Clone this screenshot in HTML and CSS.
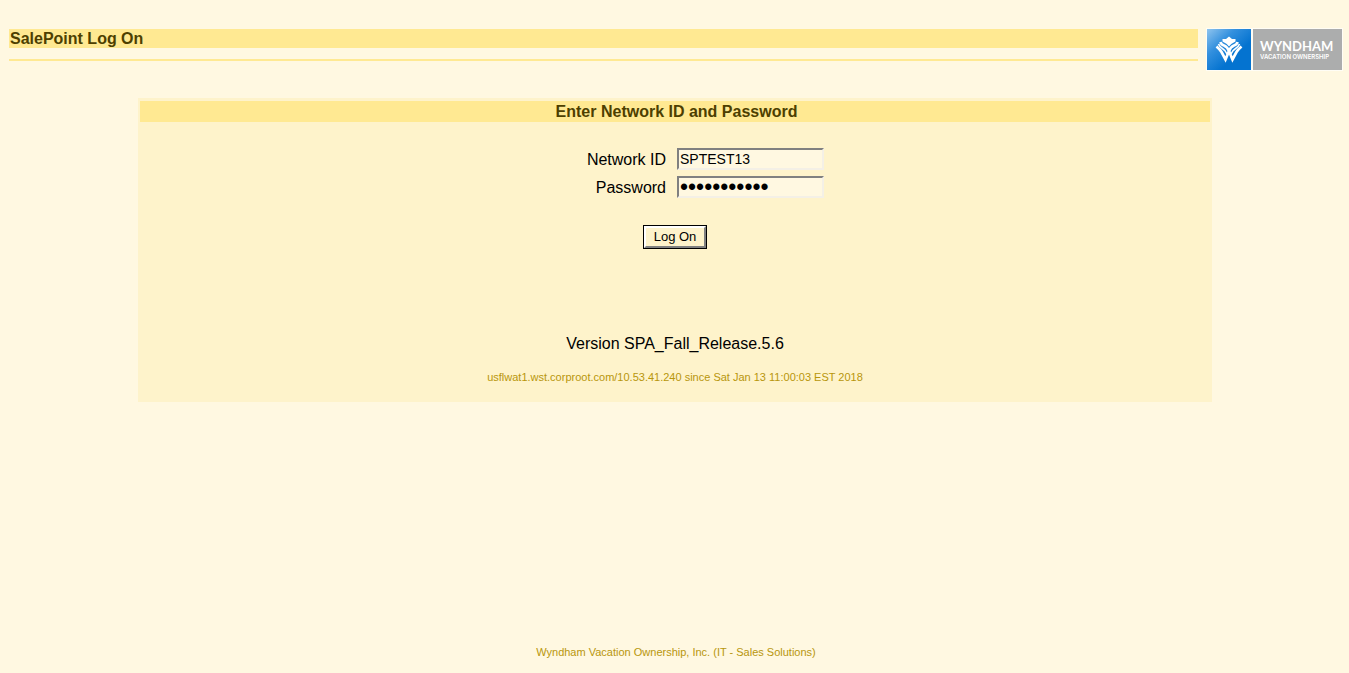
FILE: index.html
```html
<!DOCTYPE html>
<html lang="en">
<head>
<meta charset="utf-8">
<title>SalePoint Log On</title>
<link rel="stylesheet" href="styles.css">
</head>
<body>
<header class="header">
  <div class="heading">
    <h1 class="title">SalePoint Log On</h1>
    <hr class="rule">
  </div>
  <svg class="logo" width="137" height="43" viewBox="0 0 137 43" role="img" aria-label="Wyndham Vacation Ownership">
    <defs>
      <linearGradient id="blue" x1="0" y1="0" x2="0.65" y2="0.65">
        <stop offset="0" stop-color="#8fc4ee"/>
        <stop offset="0.5" stop-color="#3390de"/>
        <stop offset="1" stop-color="#0473d0"/>
      </linearGradient>
    </defs>
    <rect width="137" height="43" fill="#fffdf5"/>
    <rect x="1" y="1" width="44" height="41" fill="url(#blue)"/>
    <rect x="47" y="1" width="89" height="41" fill="#acadad"/>
    <path d="M23 8.500 L26 11 L29.500 11 L29.500 13.500 Q26 15 23 18.500 Q20 15 16.500 13.500 L16.500 11 L20 11 Z" fill="#fff"/>
    <g fill="none" stroke="#fff" stroke-width="2.7">
      <path d="M14.500 14 Q15 16.500 18 17.500 Q21.500 19 23 23 L26.500 31.500 L30.500 24 Q32 21.500 35.500 18.500"/>
      <path d="M31.500 14 Q31 16.500 28 17.500 Q24.500 19 23 23 L19.500 31.500 L15.500 24 Q14 21.500 10.500 18.500"/>
      <path d="M12.500 16 Q13.500 19 17 21 Q19.500 22.500 21 26 M33.500 16 Q32.500 19 29 21 Q26.500 22.500 25 26" stroke-width="1.6"/>
    </g>
    <text class="brand" x="54" y="23">WYNDHAM</text>
    <text class="brand-sub" x="54" y="31">VACATION OWNERSHIP</text>
  </svg>
</header>
<main class="panel">
  <h2 class="panel-title">Enter Network ID and Password</h2>
  <form class="login">
    <div class="fields">
      <label for="network-id">Network ID</label>
      <input class="field" id="network-id" type="text" value="SPTEST13">
      <label for="password">Password</label>
      <input class="field field-password" id="password" type="password" value="abcdefghijk">
    </div>
    <button class="submit" type="submit"><span class="submit-face">Log On</span></button>
  </form>
  <p class="version">Version SPA_Fall_Release.5.6</p>
  <p class="small">usflwat1.wst.corproot.com/10.53.41.240 since Sat Jan 13 11:00:03 EST 2018</p>
</main>
<footer class="footer small">Wyndham Vacation Ownership, Inc. (IT - Sales Solutions)</footer>
</body>
</html>
```
FILE: styles.css
```css
* {
  box-sizing: border-box;
}

body {
  display: flex;
  flex-direction: column;
  min-height: 100vh;
  margin: 0;
  padding: 28px 6px 12px 9px;
  background: #fff8e1;
  color: #000;
  font: 16px/18px "Liberation Sans", Arial, sans-serif;
}

.header {
  display: flex;
  gap: 8px;
}

.heading {
  flex: 1;
  padding-top: 1px;
}

.title {
  margin: 0 0 11px;
  padding-left: 1px;
  background: #ffe992;
  color: #4d3f00;
  font-size: 16px;
  line-height: 19px;
}

.rule {
  height: 2px;
  margin: 0;
  border: 0;
  background: #ffe992;
}

.logo {
  flex: none;
}

.brand {
  fill: #fff;
  font: bold 13px Lato, sans-serif;
}

.brand-sub {
  fill: #fff;
  font: 600 6px Inter, sans-serif;
}

.panel {
  margin: 27px 131px 0 129px;
  padding: 3px 2px 16px;
  background: #fef3cb;
  text-align: center;
}

.panel-title {
  margin: 0;
  padding-left: 3px;
  background: #ffe992;
  color: #4d3f00;
  font-size: 16px;
  line-height: 21px;
}

.login {
  display: flex;
  flex-direction: column;
  align-items: center;
  gap: 27px;
  padding-top: 26px;
}

.fields {
  display: grid;
  grid-template-columns: 140px 147px;
  gap: 6px 11px;
  align-items: end;
  line-height: 20px;
  text-align: right;
}

.field {
  height: 22px;
  padding: 0 1px;
  border: 2px solid;
  border-color: #808080 #f4f0e6 #f4f0e6 #808080;
  border-radius: 0;
  background: #fff8e1;
  color: #000;
  font: 14px "Liberation Sans", Arial, sans-serif;
  outline: 0;
}

.field-password {
  font-size: 23px;
}

.submit {
  width: 64px;
  height: 24px;
  padding: 0;
  border: 1px solid #000;
  border-radius: 0;
  background: #fef3cb;
  color: #000;
  font: 13px/18px "Liberation Sans", Arial, sans-serif;
}

.submit-face {
  display: block;
  border: 2px solid;
  border-color: #fff #808080 #808080 #fff;
}

.version {
  margin: 86px 0 15px;
}

.small {
  margin: 0;
  color: #b8960c;
  font-size: 11px;
}

.footer {
  margin-top: auto;
  text-align: center;
}
```
